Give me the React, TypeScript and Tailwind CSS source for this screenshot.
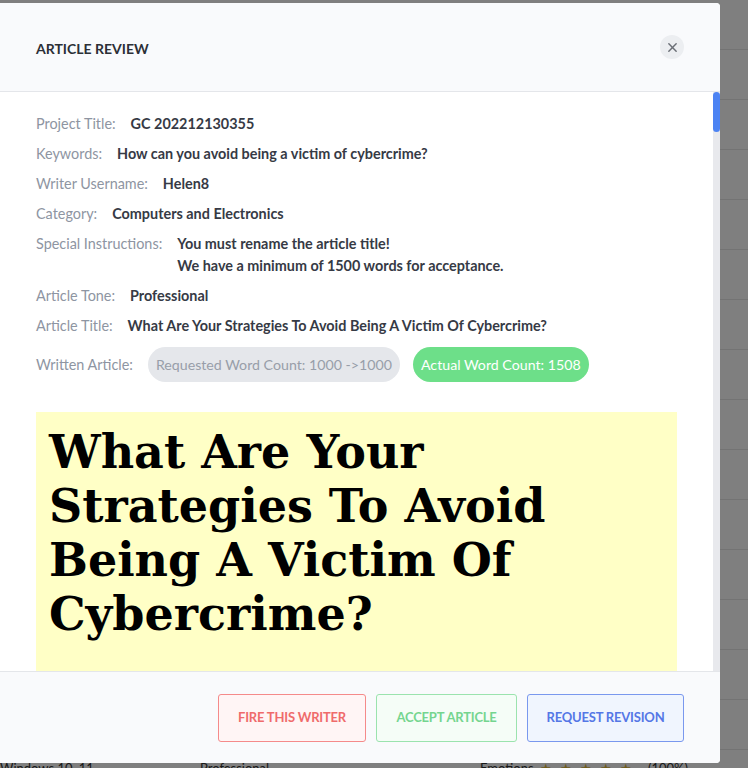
import React from 'react';

interface Field {
  label: string;
  value: string[];
}

const fields: Field[] = [
  { label: 'Project Title:', value: ['GC 202212130355'] },
  { label: 'Keywords:', value: ['How can you avoid being a victim of cybercrime?'] },
  { label: 'Writer Username:', value: ['Helen8'] },
  { label: 'Category:', value: ['Computers and Electronics'] },
  {
    label: 'Special Instructions:',
    value: ['You must rename the article title!', 'We have a minimum of 1500 words for acceptance.'],
  },
  { label: 'Article Tone:', value: ['Professional'] },
  { label: 'Article Title:', value: ['What Are Your Strategies To Avoid Being A Victim Of Cybercrime?'] },
];

const Stars = () => (
  <div className="flex gap-[8px] text-[#e0b93a]">
    {[0, 1, 2, 3, 4].map(i => (
      <span key={i}>★</span>
    ))}
  </div>
);

const App: React.FC = () => {
  return (
    <div className="relative h-[768px] w-[748px] overflow-hidden bg-white" style={{ fontFamily: 'Lato, "Noto Sans", sans-serif' }}>
      {/* page behind the dialog */}
      <div className="flex flex-col">
        {Array.from({ length: 15 }).map((_, i) => (
          <div key={i} className="h-[50px] border-b border-[#e6e6e6]" />
        ))}
        <div className="flex h-[40px] items-start pt-[9px] text-[13px] text-[#333]">
          <span className="w-[200px]">Windows 10, 11</span>
          <span className="w-[280px]">Professional</span>
          <span className="w-[60px]">Emotions</span>
          <Stars />
          <span className="ml-[16px]">(100%)</span>
        </div>
      </div>

      {/* overlay */}
      <div className="absolute inset-0 bg-black/50" />

      {/* dialog */}
      <div className="absolute left-0 top-[3px] flex h-[760px] w-[720px] flex-col overflow-hidden rounded-r-[4px] bg-white">
        <div className="flex h-[89px] shrink-0 items-center justify-between border-b border-[#e4e6ea] bg-[#f9fafc] pl-[36px] pr-[36px]">
          <h2 className="pt-[2px] text-[14px] font-bold text-[#2c2f36]">ARTICLE REVIEW</h2>
          <button className="flex h-[24px] w-[24px] items-center justify-center rounded-full bg-[#eceef1] text-[#6b6f76]">
            <svg width="11" height="11" viewBox="0 0 12 12" fill="none" stroke="currentColor" strokeWidth="1.6" strokeLinecap="round">
              <path d="M2 2l8 8M10 2l-8 8" />
            </svg>
          </button>
        </div>

        <div className="flex min-h-0 flex-1">
          <div className="min-w-0 flex-1 overflow-hidden pl-[36px] pr-[36px] pt-[23px]">
            <div className="flex flex-col gap-[12px] text-[14.4px]">
              {fields.map(f => (
                <div key={f.label} className="flex leading-[18px]">
                  <span className="mr-[15px] shrink-0 text-[#8e95a2]">{f.label}</span>
                  <div className="flex flex-col gap-[4px] font-bold text-[#363a45]">
                    {f.value.map(v => (
                      <span key={v}>{v}</span>
                    ))}
                  </div>
                </div>
              ))}
              <div className="flex items-center">
                <span className="mr-[15px] text-[#8e95a2]">Written Article:</span>
                <span className="flex h-[35px] items-center rounded-full bg-[#e5e7eb] px-[8px] text-[14.2px] text-[#989ea9]">
                  Requested Word Count: 1000 -&gt;1000
                </span>
                <span className="ml-[13px] flex h-[35px] items-center rounded-full bg-[#6ddf89] px-[8px] text-[14.2px] text-white">
                  Actual Word Count: 1508
                </span>
              </div>
            </div>

            <div className="mt-[30px] h-[400px] bg-[#ffffc6] px-[13px] pt-[13px]">
              <h1
                className="text-[46px] font-bold leading-[54px] text-black"
                style={{ fontFamily: '"DejaVu Serif", serif' }}
              >
                What Are Your Strategies To Avoid Being A Victim Of Cybercrime?
              </h1>
            </div>
          </div>
          <div className="w-[7px] shrink-0 bg-[#e8e9ed]">
            <div className="h-[40px] rounded-full bg-[#4c83f3]" />
          </div>
        </div>

        <div className="flex h-[92px] shrink-0 items-center justify-end gap-[10px] border-t border-[#e4e6ea] bg-[#f9fafc] pr-[36px]">
          <button className="h-[48px] w-[148px] rounded-[3px] border border-[#f58a8a] bg-[#fff5f5] text-[13px] font-bold tracking-[-0.2px] text-[#ef6b6b]">
            FIRE THIS WRITER
          </button>
          <button className="h-[48px] w-[141px] rounded-[3px] border border-[#9be3ae] bg-[#f5fdf7] text-[13px] font-bold tracking-[-0.2px] text-[#74d58f]">
            ACCEPT ARTICLE
          </button>
          <button className="h-[48px] w-[157px] rounded-[3px] border border-[#7a98ee] bg-[#f0f5fe] text-[13px] font-bold tracking-[-0.2px] text-[#5577e6]">
            REQUEST REVISION
          </button>
        </div>
      </div>
    </div>
  );
};

export default App;
